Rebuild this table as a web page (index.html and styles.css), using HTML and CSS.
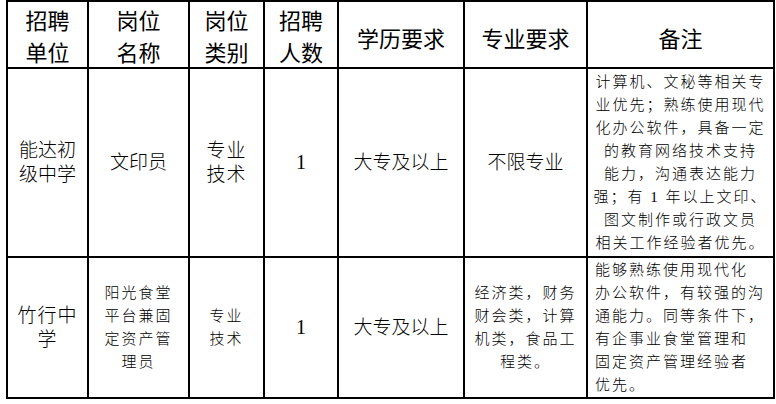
FILE: index.html
```html
<!DOCTYPE html>
<html lang="zh">
<head>
<meta charset="utf-8">
<link rel="stylesheet" href="styles.css">
</head>
<body>
<table class="grid">
  <colgroup>
    <col class="c1"><col class="c2"><col class="c3"><col class="c4"><col class="c5"><col class="c6"><col class="c7">
  </colgroup>
  <tr class="head">
    <th>招聘<br>单位</th>
    <th>岗位<br>名称</th>
    <th>岗位<br>类别</th>
    <th>招聘<br>人数</th>
    <th class="one">学历要求</th>
    <th class="one">专业要求</th>
    <th class="one">备注</th>
  </tr>
  <tr class="r1">
    <td class="big">能达初<br>级中学</td>
    <td class="big">文印员</td>
    <td class="big sp">专业<br>技术</td>
    <td class="num">1</td>
    <td class="big">大专及以上</td>
    <td class="big">不限专业</td>
    <td class="note center">计算机、文秘等相关专<br>业优先；熟练使用现代<br>化办公软件，具备一定<br>的教育网络技术支持<br>能力，沟通表达能力<br>强；有 1 年以上文印、<br>图文制作或行政文员<br>相关工作经验者优先。</td>
  </tr>
  <tr class="r2">
    <td class="big sp">竹行中<br>学</td>
    <td class="small">阳光食堂<br>平台兼固<br>定资产管<br>理员</td>
    <td class="small sp">专业<br>技术</td>
    <td class="num">1</td>
    <td class="big">大专及以上</td>
    <td class="small">经济类，财务<br>财会类，计算<br>机类，食品工<br>程类。</td>
    <td class="note left">能够熟练使用现代化<br>办公软件，有较强的沟<br>通能力。同等条件下，<br>有企事业食堂管理和<br>固定资产管理经验者<br>优先。</td>
  </tr>
</table>
</body>
</html>
```

FILE: styles.css
```css
html, body {
  margin: 0;
  padding: 0;
  background: #fff;
}
body {
  padding: 0 0 0 6px;
}
.grid {
  border-collapse: collapse;
  table-layout: fixed;
  width: 767px;
  color: #000;
}
.grid th, .grid td {
  border: 2px solid #000;
  padding: 0;
  text-align: center;
  vertical-align: middle;
}
.c1 { width: 81px; }
.c2 { width: 101px; }
.c3 { width: 75px; }
.c4 { width: 74px; }
.c5 { width: 126px; }
.c6 { width: 123px; }
.c7 { width: 187px; }

.head { height: 67px; }
.head th {
  font-family: "Noto Sans CJK SC", sans-serif;
  font-weight: 400;
  font-size: 22px;
  line-height: 32px;
  padding-top: 1px;
}
.head th.one { padding-top: 4px; }
.r1 { height: 189px; }
.r2 { height: 141px; }

.big {
  font-family: "Liberation Serif", "Noto Sans CJK SC", serif;
  font-weight: 300;
  font-size: 19px;
  line-height: 24px;
}
.sp { letter-spacing: 1px; }
.small {
  font-family: "Liberation Serif", "Noto Sans CJK SC", serif;
  font-weight: 300;
  font-size: 15px;
  line-height: 23px;
  letter-spacing: 2px;
}
.num {
  font-family: "Liberation Serif", serif;
  font-size: 20px;
}
.note {
  font-family: "Liberation Serif", "Noto Sans CJK SC", serif;
  font-weight: 300;
  font-size: 15px;
  line-height: 23px;
  letter-spacing: 2px;
}
.note.center { text-align: center; }
.note.left { text-align: left; padding-left: 7px; }
```
